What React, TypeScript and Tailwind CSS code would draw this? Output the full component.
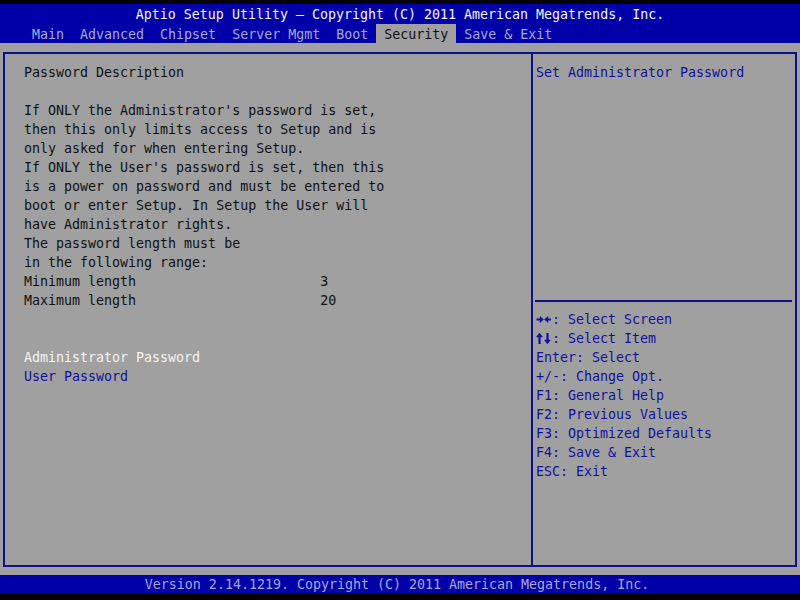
const tabs = ["Main", "Advanced", "Chipset", "Server Mgmt", "Boot", "Security", "Save & Exit"];

const description = [
  "Password Description",
  "",
  "If ONLY the Administrator's password is set,",
  "then this only limits access to Setup and is",
  "only asked for when entering Setup.",
  "If ONLY the User's password is set, then this",
  "is a power on password and must be entered to",
  "boot or enter Setup. In Setup the User will",
  "have Administrator rights.",
  "The password length must be",
  "in the following range:",
  "Minimum length                       3",
  "Maximum length                       20",
  "",
  "",
];

// bold arrow glyphs of the bios font
const LeftRight = () => (
  <svg width="16" height="19" viewBox="0 0 16 19" className="shrink-0" fill="#10109c" stroke="#10109c">
    <line x1="0.5" y1="9.5" x2="5" y2="9.5" strokeWidth="2" />
    <polygon points="4,6.5 7.5,9.5 4,12.5" strokeWidth="0.5" />
    <polygon points="12,6.5 8.5,9.5 12,12.5" strokeWidth="0.5" />
    <line x1="11" y1="9.5" x2="15" y2="9.5" strokeWidth="2" />
  </svg>
);

const UpDown = () => (
  <svg width="16" height="19" viewBox="0 0 16 19" className="shrink-0" fill="#10109c" stroke="#10109c">
    <polygon points="0.5,8 3.5,4 6.5,8" strokeWidth="0.5" />
    <line x1="3.5" y1="7" x2="3.5" y2="15" strokeWidth="2.2" />
    <line x1="11.5" y1="4" x2="11.5" y2="12" strokeWidth="2.2" />
    <polygon points="8.5,11 11.5,15 14.5,11" strokeWidth="0.5" />
  </svg>
);

const help: [React.ReactNode, string][] = [
  [<LeftRight />, ": Select Screen"],
  [<UpDown />, ": Select Item"],
  [null, "Enter: Select"],
  [null, "+/-: Change Opt."],
  [null, "F1: General Help"],
  [null, "F2: Previous Values"],
  [null, "F3: Optimized Defaults"],
  [null, "F4: Save & Exit"],
  [null, "ESC: Exit"],
];

const App: React.FC = () => {
  return (
    <div className="w-[800px] h-[600px] bg-black flex flex-col font-['DejaVu_Sans_Mono',monospace] text-[13.3px] leading-[19px] overflow-hidden">
      {/* header */}
      <div className="mt-[4px] h-[39px] bg-[#0000a8] flex flex-col">
        <div className="h-[20px] pt-[1px] flex items-center justify-center text-[#f4f4f4] whitespace-pre">
          Aptio Setup Utility – Copyright (C) 2011 American Megatrends, Inc.
        </div>
        <div className="h-[19px] flex pl-[24px]">
          {tabs.map((t) => (
            <span
              key={t}
              className={
                t === "Security"
                  ? "px-2 pt-[1px] bg-[#a0a0a0] text-[#101010] whitespace-pre"
                  : "px-2 pt-[1px] text-[#a8a8dc] whitespace-pre"
              }
            >
              {t}
            </span>
          ))}
        </div>
      </div>

      {/* body */}
      <div className="h-[532px] bg-[#a0a0a0] px-[3px] pt-[9px] pb-[8px]">
        <div className="h-full border-2 border-[#10108c] flex">
          <div className="w-[528px] border-r-2 border-[#10108c] pl-[19px] pt-[9px] text-[#101010]">
            {description.map((l, i) => (
              <div key={i} className="h-[19px] whitespace-pre">
                {l}
              </div>
            ))}
            <div className="h-[19px] text-[#f4f4f4]">Administrator Password</div>
            <div className="h-[19px] text-[#10109c]">User Password</div>
          </div>
          <div className="flex-1 pt-[9px] pl-[3px] pr-[3px] text-[#10109c]">
            <div className="h-[19px] whitespace-pre">Set Administrator Password</div>
            <div className="h-[209px]" />
            <div className="h-[19px] flex items-center -ml-[1px]">
              <div className="w-full h-[2px] bg-[#10108c]" />
            </div>
            {help.map(([a, l]) => (
              <div key={l} className="h-[19px] whitespace-pre flex">
                {a}
                <span>{l}</span>
              </div>
            ))}
          </div>
        </div>
      </div>

      {/* footer */}
      <div className="h-[18px] pr-[6px] pt-[1px] bg-[#0000a8] flex items-center justify-center text-[#a8a8dc] whitespace-pre">
        Version 2.14.1219. Copyright (C) 2011 American Megatrends, Inc.
      </div>
    </div>
  );
};

export default App;
